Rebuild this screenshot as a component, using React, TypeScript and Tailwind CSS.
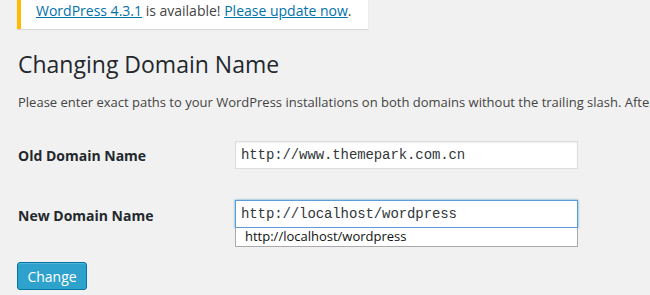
import React from 'react'

export default function App() {
  return (
    <div className="w-[650px] h-[295px] overflow-hidden bg-[#f1f1f1] text-[#444] font-['Open_Sans','Liberation_Sans',sans-serif]">
      {/* update nag */}
      <div className="ml-[17px] w-[351px] h-[38px] -mt-[9px] bg-white border-l-4 border-[#ffba00] shadow-[0_1px_1px_rgba(0,0,0,0.1)] flex items-center pl-[15px] text-[14px]">
        <span>
          <a className="text-[#0073aa] underline" href="#">WordPress 4.3.1</a> is available!{' '}
          <a className="text-[#0073aa] underline" href="#">Please update now</a>.
        </span>
      </div>

      <div className="pl-[18px]">
        <h1 className="mt-[21px] text-[23px] leading-[29px] text-[#23282d]">Changing Domain Name</h1>
        <p className="mt-[14px] text-[13px] leading-[18px] whitespace-nowrap">
          Please enter exact paths to your WordPress installations on both domains without the trailing slash. After
        </p>

        <div className="mt-[30px] flex items-center">
          <label className="w-[217px] text-[14px] font-bold text-[#23282d]">Old Domain Name</label>
          <div className="w-[343px] h-[28px] bg-white border border-[#ddd] shadow-[inset_0_1px_2px_rgba(0,0,0,0.07)] flex items-center px-[5px] font-['Liberation_Mono',monospace] text-[14px] tracking-[-0.1px] text-[#32373c]">
            http://www.themepark.com.cn
          </div>
        </div>

        <div className="mt-[31px] flex">
          <label className="w-[217px] pt-[5px] text-[14px] font-bold text-[#23282d]">New Domain Name</label>
          <div className="flex flex-col">
            <div className="w-[343px] h-[28px] bg-white border border-[#5b9dd9] shadow-[0_0_2px_rgba(30,140,190,0.8)] flex items-center px-[5px] font-['Liberation_Mono',monospace] text-[14px] tracking-[-0.1px] text-[#32373c]">
              http://localhost/wordpress
            </div>
            <div className="w-[343px] h-[19px] bg-white border border-t-0 border-[#aaa] flex items-center pl-[9px] text-[13px] text-[#111]">
              http://localhost/wordpress
            </div>
          </div>
        </div>
      </div>

      <div className="pl-[17px] mt-[15px]">
        <button className="w-[70px] h-[28px] bg-[#2ea2cc] border border-[#0074a2] rounded-[3px] text-white text-[14px] shadow-[inset_0_1px_0_rgba(120,200,230,0.5)]">
          Change
        </button>
      </div>
    </div>
  )
}
